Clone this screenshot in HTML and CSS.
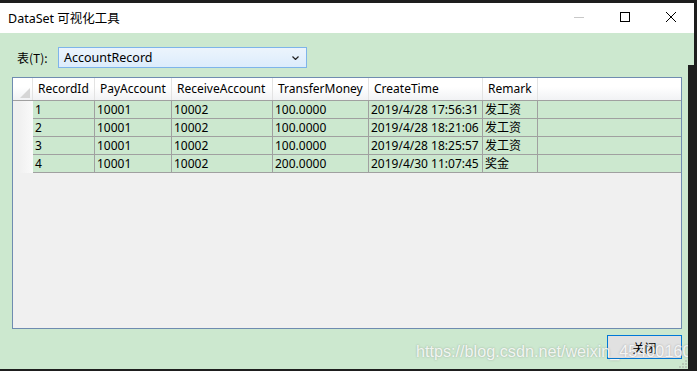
FILE: index.html
```html
<!DOCTYPE html>
<html lang="zh-CN">
<head>
  <meta charset="UTF-8">
  <title>DataSet 可视化工具</title>
  <link rel="stylesheet" href="styles.css">
</head>
<body>

  <div class="top-strip"></div>

  <div class="window">
    <div class="titlebar">
      <span class="title">DataSet 可视化工具</span>
      <div class="controls">
        <span class="ctl ctl-min"><svg width="10" height="10" viewBox="0 0 10 10"><path d="M0 5.5h10" stroke="#c8c8c8" stroke-width="1"/></svg></span>
        <span class="ctl"><svg width="10" height="10" viewBox="0 0 10 10"><rect x="0.5" y="0.5" width="9" height="9" fill="none" stroke="#000" stroke-width="1"/></svg></span>
        <span class="ctl"><svg width="10" height="10" viewBox="0 0 10 10"><path d="M0 0L10 10M10 0L0 10" stroke="#000" stroke-width="1"/></svg></span>
      </div>
    </div>

    <div class="client">
      <div class="toolbar">
        <label class="tb-label">表(T):</label>
        <div class="combo">
          <span>AccountRecord</span>
          <svg width="7" height="4" viewBox="0 0 7 4"><path d="M0.5 0.5L3.5 3.5L6.5 0.5" fill="none" stroke="#222" stroke-width="1.2"/></svg>
        </div>
      </div>

      <div class="grid">
        <div class="row head">
          <div class="cell corner"><svg width="10" height="10" viewBox="0 0 10 10"><polygon points="10,0 10,10 0,10" fill="#d6d6d6"/></svg></div>
          <div class="cell">RecordId</div>
          <div class="cell">PayAccount</div>
          <div class="cell">ReceiveAccount</div>
          <div class="cell">TransferMoney</div>
          <div class="cell">CreateTime</div>
          <div class="cell">Remark</div>
          <div class="cell fill"></div>
        </div>
        <div class="row data">
          <div class="cell rh"></div>
          <div class="cell">1</div>
          <div class="cell">10001</div>
          <div class="cell">10002</div>
          <div class="cell">100.0000</div>
          <div class="cell">2019/4/28 17:56:31</div>
          <div class="cell">发工资</div>
          <div class="cell fill"></div>
        </div>
        <div class="row data">
          <div class="cell rh"></div>
          <div class="cell">2</div>
          <div class="cell">10001</div>
          <div class="cell">10002</div>
          <div class="cell">100.0000</div>
          <div class="cell">2019/4/28 18:21:06</div>
          <div class="cell">发工资</div>
          <div class="cell fill"></div>
        </div>
        <div class="row data">
          <div class="cell rh"></div>
          <div class="cell">3</div>
          <div class="cell">10001</div>
          <div class="cell">10002</div>
          <div class="cell">100.0000</div>
          <div class="cell">2019/4/28 18:25:57</div>
          <div class="cell">发工资</div>
          <div class="cell fill"></div>
        </div>
        <div class="row data">
          <div class="cell rh"></div>
          <div class="cell">4</div>
          <div class="cell">10001</div>
          <div class="cell">10002</div>
          <div class="cell">200.0000</div>
          <div class="cell">2019/4/30 11:07:45</div>
          <div class="cell">奖金</div>
          <div class="cell fill"></div>
        </div>
      </div>

      <div class="footer">
        <button class="btn">关闭</button>
      </div>

      <svg class="grip" width="8" height="8" viewBox="0 0 8 8">
        <rect x="6" y="0" width="2" height="2" fill="#b8c8b8"/>
        <rect x="3" y="3" width="2" height="2" fill="#b8c8b8"/>
        <rect x="6" y="3" width="2" height="2" fill="#b8c8b8"/>
        <rect x="0" y="6" width="2" height="2" fill="#b8c8b8"/>
        <rect x="3" y="6" width="2" height="2" fill="#b8c8b8"/>
        <rect x="6" y="6" width="2" height="2" fill="#b8c8b8"/>
      </svg>
    </div>

    <div class="watermark">https://blog.csdn.net/weixin_45400160</div>
    <div class="side-strip"></div>
  </div>

  <div class="bottom-strip"></div>

</body>
</html>
```

FILE: styles.css
```css
body {
  margin: 0;
  background-color: #1e1e1e;
  font-family: "Noto Sans", "Noto Sans CJK SC", sans-serif;
  font-size: 12px;
  color: #000;
  width: 697px;
  height: 371px;
  overflow: hidden;
}

.top-strip {
  height: 3px;
  background-color: #1e1e1e;
}

.window {
  position: relative;
  width: 694px;
}

.titlebar {
  height: 30px;
  background-color: #fff;
  display: flex;
  align-items: center;
  justify-content: space-between;
}

.title {
  padding-left: 8px;
  font-family: "Noto Sans", "Noto Sans CJK SC", sans-serif;
  font-size: 12.5px;
  margin-top: -1px;
}

.controls {
  display: flex;
  height: 100%;
}

.ctl {
  width: 46px;
  display: flex;
  align-items: center;
  justify-content: center;
  margin-top: -2px;
}

.client {
  position: relative;
  height: 336px;
  background-color: #cce8cf;
  padding: 0 12px;
  display: flex;
  flex-direction: column;
}

.toolbar {
  display: flex;
  align-items: center;
  padding: 14px 0 0 5px;
  height: 21px;
}

.tb-label {
  width: 41px;
  font-family: "Noto Sans CJK SC", sans-serif;
}

.combo {
  box-sizing: border-box;
  width: 249px;
  height: 21px;
  border: 1px solid #7eb4ea;
  background: linear-gradient(#ecf4fc, #dcecfc);
  display: flex;
  align-items: center;
  justify-content: space-between;
  padding: 0 7px 0 5px;
  font-size: 12.5px;
}

.grid {
  margin-top: 9px;
  box-sizing: border-box;
  height: 252px;
  border: 1px solid #6f8cb0;
  background-color: #f0f0f0;
}

.row {
  display: grid;
  grid-template-columns: 20px 62px 77px 101px 96px 114px 55px 1fr;
}

.cell {
  box-sizing: border-box;
  white-space: nowrap;
  overflow: hidden;
}

.head {
  height: 23px;
  background: linear-gradient(#ffffff 40%, #f1f2f4);
  border-bottom: 1px solid #a0a0a0;
  box-sizing: border-box;
}

.head .cell {
  padding-left: 5px;
  line-height: 22px;
  border-right: 1px solid #e3e3e3;
}

.head .cell.fill {
  border-right: none;
}

.head .corner {
  display: flex;
  align-items: flex-end;
  justify-content: flex-end;
  padding: 0 2px 2px 0;
}

.data {
  height: 18px;
}

.data .cell {
  background-color: #cce8cf;
  border-right: 1px solid #a0a0a0;
  border-bottom: 1px solid #a0a0a0;
  padding-left: 2px;
  line-height: 17px;
}

.data .cell.fill {
  border-right: none;
}

.data .cell.rh {
  background: linear-gradient(90deg, #f0f0f0 30%, #fafafa);
  border-bottom: none;
  border-right: none;
}

.footer {
  display: flex;
  justify-content: flex-end;
  padding-top: 6px;
}

.btn {
  box-sizing: border-box;
  width: 75px;
  height: 24px;
  border: 1px solid #0078d7;
  background-color: #e1e1e1;
  font-family: "Noto Sans CJK SC", sans-serif;
  font-size: 12px;
  color: #000;
  padding: 0;
}

.grip {
  position: absolute;
  right: 7px;
  bottom: 1px;
}

/* csdn watermark lies over the dialog */
.watermark {
  position: absolute;
  left: 416px;
  top: 339px;
  font-family: "Liberation Sans", Arial, sans-serif;
  font-size: 16.2px;
  color: rgba(255, 255, 255, 0.85);
  text-shadow: 0 0 2px rgba(90, 90, 90, 0.45);
  white-space: nowrap;
}

.side-strip {
  position: absolute;
  left: 688px;
  top: 62px;
  width: 6px;
  height: 307px;
  background-color: #1e1e1e;
}

.bottom-strip {
  height: 2px;
  background-color: #1e1e1e;
}
```
